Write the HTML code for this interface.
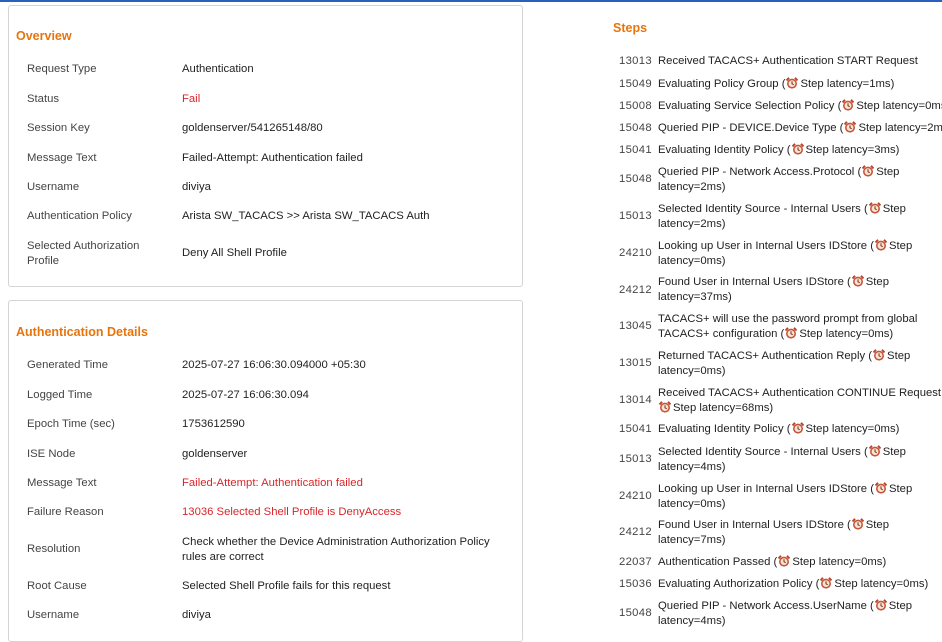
<!DOCTYPE html>
<html><head><meta charset="utf-8"><style>
body{margin:0;width:942px;height:633px;overflow:hidden;background:#fff;font-family:"Liberation Sans",Arial,sans-serif;font-size:11.3px;color:#222;position:relative}
.top{position:absolute;left:0;top:0;width:942px;height:2px;background:#2a5fbf}
.box{position:absolute;left:8px;width:513px;border:1px solid #d4d4d4;border-radius:3px;background:#fff}
.h{position:absolute;color:#e8740c;font-weight:bold;font-size:12.5px}
.l{position:absolute;left:27px;color:#444;line-height:15px;white-space:nowrap}
.v{position:absolute;left:182px;line-height:15px;white-space:nowrap}
.r{color:#d8262a}
.n{position:absolute;left:619px;color:#444;line-height:15px;letter-spacing:0.3px}
.t{position:absolute;left:658px;line-height:15px;white-space:nowrap}
.c{display:inline-block;width:12px;height:12px;vertical-align:-2px;margin:0 2px 0 1px}
</style></head><body>
<div class="top"></div>
<div class="box" style="top:5px;height:280px"></div>
<div class="box" style="top:300px;height:340px"></div>
<div class="h" style="left:16px;top:29px">Overview</div>
<div class="l" style="top:62px">Request Type</div><div class="v" style="top:62px">Authentication</div>
<div class="l" style="top:92px">Status</div><div class="v r" style="top:92px">Fail</div>
<div class="l" style="top:121px">Session Key</div><div class="v" style="top:121px">goldenserver/541265148/80</div>
<div class="l" style="top:151px">Message Text</div><div class="v" style="top:151px">Failed-Attempt: Authentication failed</div>
<div class="l" style="top:180px">Username</div><div class="v" style="top:180px">diviya</div>
<div class="l" style="top:209px">Authentication Policy</div><div class="v" style="top:209px">Arista SW_TACACS &gt;&gt; Arista SW_TACACS Auth</div>
<div class="l" style="top:239px">Selected Authorization<br>Profile</div><div class="v" style="top:246px">Deny All Shell Profile</div>

<div class="h" style="left:16px;top:325px">Authentication Details</div>
<div class="l" style="top:358px">Generated Time</div><div class="v" style="top:358px">2025-07-27 16:06:30.094000 +05:30</div>
<div class="l" style="top:388px">Logged Time</div><div class="v" style="top:388px">2025-07-27 16:06:30.094</div>
<div class="l" style="top:417px">Epoch Time (sec)</div><div class="v" style="top:417px">1753612590</div>
<div class="l" style="top:447px">ISE Node</div><div class="v" style="top:447px">goldenserver</div>
<div class="l" style="top:476px">Message Text</div><div class="v r" style="top:476px">Failed-Attempt: Authentication failed</div>
<div class="l" style="top:505px">Failure Reason</div><div class="v r" style="top:505px">13036 Selected Shell Profile is DenyAccess</div>
<div class="l" style="top:542px">Resolution</div><div class="v" style="top:535px">Check whether the Device Administration Authorization Policy<br>rules are correct</div>
<div class="l" style="top:579px">Root Cause</div><div class="v" style="top:579px">Selected Shell Profile fails for this request</div>
<div class="l" style="top:608px">Username</div><div class="v" style="top:608px">diviya</div>

<svg width="0" height="0" style="position:absolute"><defs><symbol id="ck" viewBox="0 0 12 12"><path d="M0.5 3.5L3 0.8M11.5 3.5L9 0.8" stroke="#b8452a" stroke-width="2"/><circle cx="6" cy="6.6" r="5" fill="#c8553a"/><circle cx="6" cy="6.6" r="3.4" fill="#f5e6d6"/><path d="M6 4.3V6.8L7.7 7.7" stroke="#7a2a1a" stroke-width="1" fill="none"/></symbol></defs></svg>

<div class="h" style="left:613px;top:21px">Steps</div>
<div class="n" style="top:54px">13013</div><div class="t" style="top:54px">Received TACACS+ Authentication START Request</div>
<div class="n" style="top:77px">15049</div><div class="t" style="top:77px">Evaluating Policy Group (<svg class="c"><use href="#ck"/></svg>Step latency=1ms)</div>
<div class="n" style="top:99px">15008</div><div class="t" style="top:99px">Evaluating Service Selection Policy (<svg class="c"><use href="#ck"/></svg>Step latency=0ms)</div>
<div class="n" style="top:121px">15048</div><div class="t" style="top:121px">Queried PIP - DEVICE.Device Type (<svg class="c"><use href="#ck"/></svg>Step latency=2ms)</div>
<div class="n" style="top:143px">15041</div><div class="t" style="top:143px">Evaluating Identity Policy (<svg class="c"><use href="#ck"/></svg>Step latency=3ms)</div>
<div class="n" style="top:172px">15048</div><div class="t" style="top:165px">Queried PIP - Network Access.Protocol (<svg class="c"><use href="#ck"/></svg>Step<br>latency=2ms)</div>
<div class="n" style="top:209px">15013</div><div class="t" style="top:202px">Selected Identity Source - Internal Users (<svg class="c"><use href="#ck"/></svg>Step<br>latency=2ms)</div>
<div class="n" style="top:246px">24210</div><div class="t" style="top:239px">Looking up User in Internal Users IDStore (<svg class="c"><use href="#ck"/></svg>Step<br>latency=0ms)</div>
<div class="n" style="top:283px">24212</div><div class="t" style="top:275px">Found User in Internal Users IDStore (<svg class="c"><use href="#ck"/></svg>Step<br>latency=37ms)</div>
<div class="n" style="top:319px">13045</div><div class="t" style="top:312px">TACACS+ will use the password prompt from global<br>TACACS+ configuration (<svg class="c"><use href="#ck"/></svg>Step latency=0ms)</div>
<div class="n" style="top:356px">13015</div><div class="t" style="top:349px">Returned TACACS+ Authentication Reply (<svg class="c"><use href="#ck"/></svg>Step<br>latency=0ms)</div>
<div class="n" style="top:393px">13014</div><div class="t" style="top:386px">Received TACACS+ Authentication CONTINUE Request (<br><svg class="c"><use href="#ck"/></svg>Step latency=68ms)</div>
<div class="n" style="top:422px">15041</div><div class="t" style="top:422px">Evaluating Identity Policy (<svg class="c"><use href="#ck"/></svg>Step latency=0ms)</div>
<div class="n" style="top:452px">15013</div><div class="t" style="top:445px">Selected Identity Source - Internal Users (<svg class="c"><use href="#ck"/></svg>Step<br>latency=4ms)</div>
<div class="n" style="top:489px">24210</div><div class="t" style="top:482px">Looking up User in Internal Users IDStore (<svg class="c"><use href="#ck"/></svg>Step<br>latency=0ms)</div>
<div class="n" style="top:525px">24212</div><div class="t" style="top:518px">Found User in Internal Users IDStore (<svg class="c"><use href="#ck"/></svg>Step<br>latency=7ms)</div>
<div class="n" style="top:555px">22037</div><div class="t" style="top:555px">Authentication Passed (<svg class="c"><use href="#ck"/></svg>Step latency=0ms)</div>
<div class="n" style="top:577px">15036</div><div class="t" style="top:577px">Evaluating Authorization Policy (<svg class="c"><use href="#ck"/></svg>Step latency=0ms)</div>
<div class="n" style="top:606px">15048</div><div class="t" style="top:599px">Queried PIP - Network Access.UserName (<svg class="c"><use href="#ck"/></svg>Step<br>latency=4ms)</div>
</body></html>
